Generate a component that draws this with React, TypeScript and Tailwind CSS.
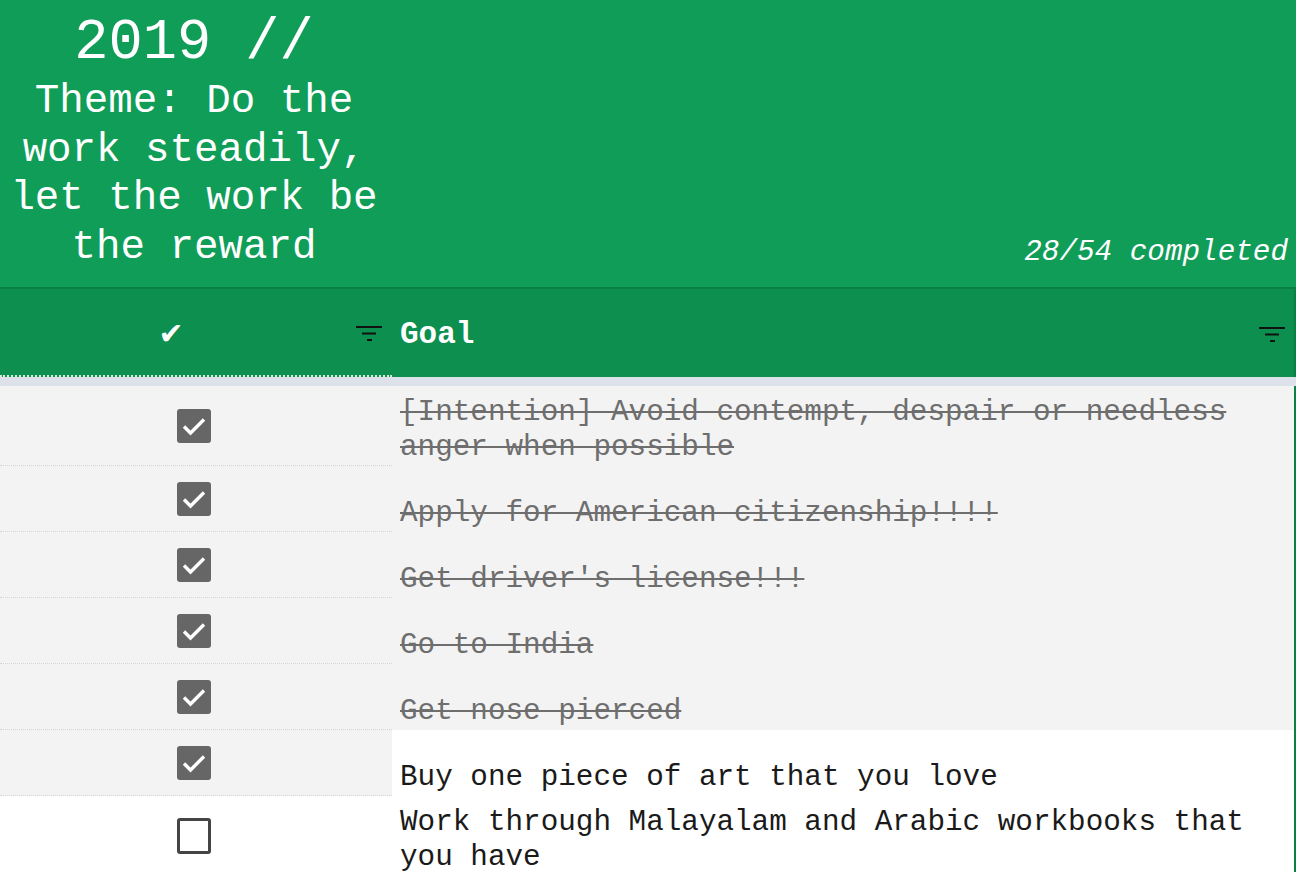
import React from 'react';

interface Goal {
  text: string;
  done: boolean;
  struck: boolean;
  leftGray: boolean;
  rightGray: boolean;
}

const goals: Goal[] = [
  { text: '[Intention] Avoid contempt, despair or needless anger when possible', done: true, struck: true, leftGray: true, rightGray: true },
  { text: 'Apply for American citizenship!!!!', done: true, struck: true, leftGray: true, rightGray: true },
  { text: "Get driver's license!!!", done: true, struck: true, leftGray: true, rightGray: true },
  { text: 'Go to India', done: true, struck: true, leftGray: true, rightGray: true },
  { text: 'Get nose pierced', done: true, struck: true, leftGray: true, rightGray: true },
  { text: 'Buy one piece of art that you love', done: true, struck: false, leftGray: true, rightGray: false },
  { text: 'Work through Malayalam and Arabic workbooks that you have', done: false, struck: false, leftGray: false, rightGray: false },
];

const FilterIcon: React.FC = () => (
  <svg width="26" height="16" viewBox="0 0 26 16" className="shrink-0">
    <rect x="0" y="0" width="26" height="2" fill="#111" />
    <rect x="6" y="6.5" width="14" height="2" fill="#111" />
    <rect x="11" y="13" width="5" height="2" fill="#111" />
  </svg>
);

const Checkbox: React.FC<{ checked: boolean }> = ({ checked }) =>
  checked ? (
    <div className="w-[34px] h-[34px] rounded-[3px] bg-[#666666] flex items-center justify-center">
      <svg width="34" height="34" viewBox="0 0 34 34">
        <path d="M7 17.5 L13.5 24 L27 10.5" stroke="#fff" strokeWidth="3.4" fill="none" />
      </svg>
    </div>
  ) : (
    <div className="w-[34px] h-[36px] rounded-[3px] border-[3px] border-[#444] bg-white" />
  );

const App: React.FC = () => {
  return (
    <div className="w-[1296px] h-[872px] overflow-hidden bg-white font-['Liberation_Mono',monospace]">
      {/* banner */}
      <div className="h-[287px] bg-[#109d58] flex items-end justify-between text-white">
        <div className="w-[388px] self-start pt-[10px] text-center">
          <div className="text-[57px] leading-[67px]">2019 //</div>
          <div className="text-[40.8px] leading-[48.7px]">
            Theme: Do the work steadily, let the work be the reward
          </div>
        </div>
        <div className="italic text-[29.3px] leading-[35px] pb-[17px] pr-[8px]">28/54 completed</div>
      </div>

      {/* column headers */}
      <div className="flex h-[90px] bg-[#0c8f4f] border-t-2 border-[#0a8043] text-white">
        <div className="w-[392px] flex items-center pt-[4px] border-b-2 border-dotted border-[#d6eadc]">
          <div className="flex-1 text-center text-[30px] leading-none font-['DejaVu_Sans',sans-serif] pr-[4px]">✔</div>
          <div className="mx-[10px]">
            <FilterIcon />
          </div>
        </div>
        <div className="flex-1 flex items-center pt-[4px] pl-[8px] border-r-2 border-[#0a8043]">
          <div className="flex-1 text-[31px] font-bold">Goal</div>
          <div className="mr-[9px]">
            <FilterIcon />
          </div>
        </div>
      </div>
      <div className="h-[9px] bg-[#dde1ea]" />

      {/* rows */}
      {goals.map((g, i) => (
        <div key={i} className="flex">
          <div
            className={`w-[392px] flex items-center justify-center pr-[5px] border-b border-dotted border-[#d4d4d4] ${
              g.leftGray ? 'bg-[#f3f3f3]' : 'bg-white'
            }`}
          >
            <Checkbox checked={g.done} />
          </div>
          <div
            className={`flex-1 min-h-[66px] flex items-end pl-[8px] pr-[40px] pt-[9px] pb-[1px] border-r-2 border-[#0a8043] ${
              g.rightGray ? 'bg-[#f3f3f3]' : 'bg-white'
            }`}
          >
            <div
              className={`text-[29.3px] leading-[35px] ${
                g.struck ? 'text-[#6e6e6e] line-through' : 'text-[#1a1a1a]'
              }`}
            >
              {g.text}
            </div>
          </div>
        </div>
      ))}
    </div>
  );
};

export default App;
